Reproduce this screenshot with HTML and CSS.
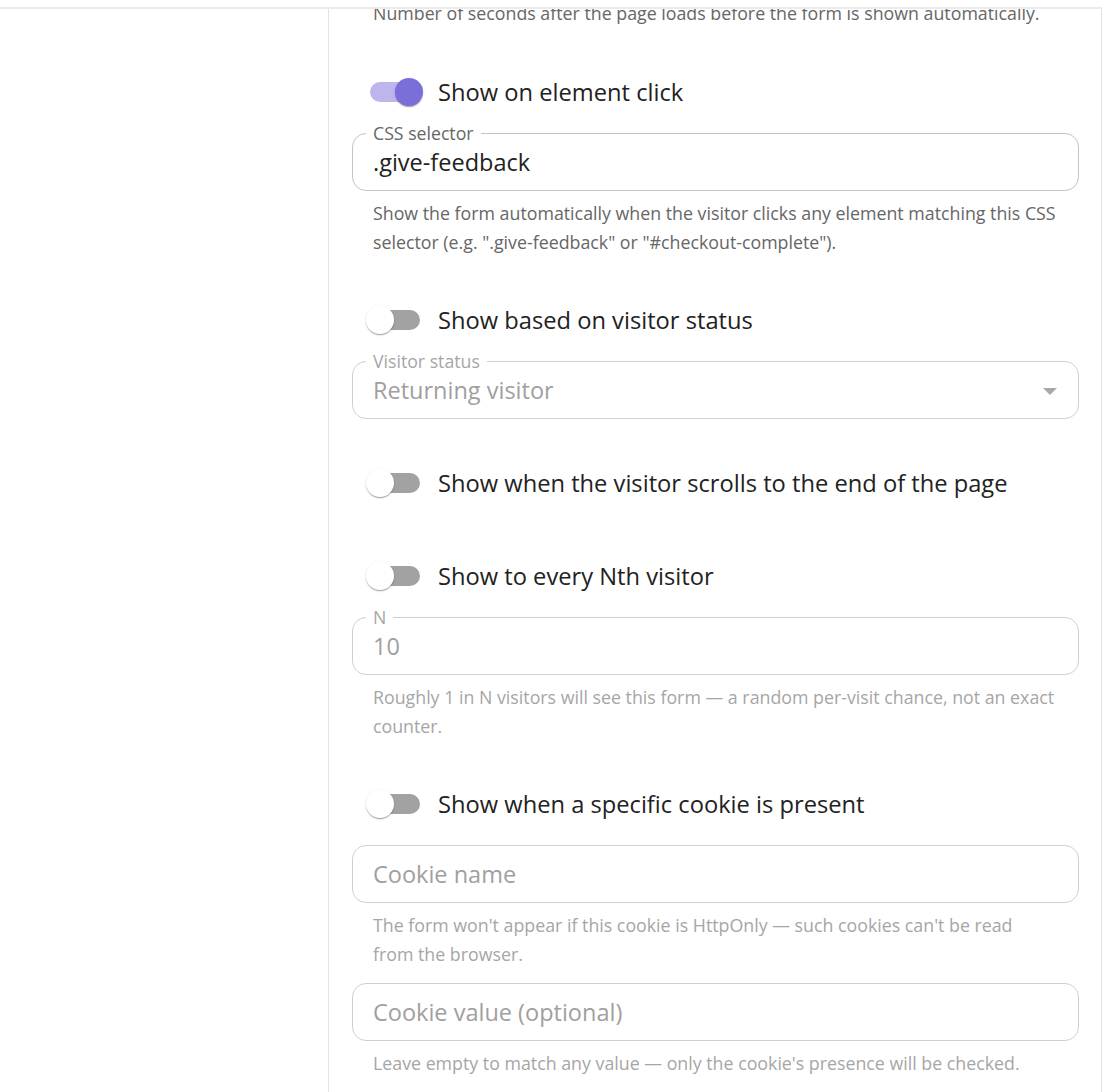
FILE: index.html
```html
<!DOCTYPE html>
<html lang="en">
<head>
<meta charset="utf-8">
<title>Form display triggers</title>
<link rel="stylesheet" href="styles.css">
</head>
<body>
<div class="topbar"></div>
<div class="layout">
  <aside class="sidebar"></aside>
  <main class="panel">
    <p class="helper first">Number of seconds after the page loads before the form is shown automatically.</p>

    <section class="trigger lead">
      <div class="switch-row">
        <span class="switch on"><span class="track"></span><span class="thumb"></span></span>
        <span class="switch-label">Show on element click</span>
      </div>
      <div class="field">
        <span class="field-label">CSS selector</span>
        <span class="field-value">.give-feedback</span>
      </div>
      <p class="helper">Show the form automatically when the visitor clicks any element matching this CSS selector (e.g. ".give-feedback" or "#checkout-complete").</p>
    </section>

    <section class="trigger">
      <div class="switch-row">
        <span class="switch"><span class="track"></span><span class="thumb"></span></span>
        <span class="switch-label">Show based on visitor status</span>
      </div>
      <div class="field disabled">
        <span class="field-label">Visitor status</span>
        <span class="field-value">Returning visitor</span>
        <span class="arrow"></span>
      </div>
    </section>

    <section class="trigger solo">
      <div class="switch-row">
        <span class="switch"><span class="track"></span><span class="thumb"></span></span>
        <span class="switch-label">Show when the visitor scrolls to the end of the page</span>
      </div>
    </section>

    <section class="trigger">
      <div class="switch-row">
        <span class="switch"><span class="track"></span><span class="thumb"></span></span>
        <span class="switch-label">Show to every Nth visitor</span>
      </div>
      <div class="field disabled">
        <span class="field-label">N</span>
        <span class="field-value">10</span>
      </div>
      <p class="helper disabled">Roughly 1 in N visitors will see this form — a random per-visit chance, not an exact counter.</p>
    </section>

    <section class="trigger">
      <div class="switch-row">
        <span class="switch"><span class="track"></span><span class="thumb"></span></span>
        <span class="switch-label">Show when a specific cookie is present</span>
      </div>
      <div class="field disabled">
        <span class="field-value placeholder">Cookie name</span>
      </div>
      <p class="helper disabled narrow">The form won't appear if this cookie is HttpOnly — such cookies can't be read from the browser.</p>
      <div class="field disabled second">
        <span class="field-value placeholder">Cookie value (optional)</span>
      </div>
      <p class="helper disabled">Leave empty to match any value — only the cookie's presence will be checked.</p>
    </section>
  </main>
</div>
</body>
</html>
```

FILE: styles.css
```css
* { box-sizing: border-box; }

html, body {
  margin: 0;
  padding: 0;
  background: #fff;
  height: 100%;
  overflow: hidden;
}

body {
  font-family: "Open Sans", "Noto Sans", sans-serif;
  color: rgba(0, 0, 0, 0.87);
}

.topbar {
  position: relative;
  z-index: 2;
  height: 9px;
  background: #fff;
  border-bottom: 2px solid #ebebeb;
}

.layout {
  display: grid;
  grid-template-columns: 328px 774px;
  min-height: 1100px;
}

.panel {
  border-left: 1px solid #e4e4e4;
  border-right: 1px solid #e4e4e4;
  padding: 0 22px 0 23px;
}

.helper {
  margin: 8px 0 0;
  padding: 0 21px;
  font-size: 17.8px;
  line-height: 29.5px;
  color: #666;
}

.helper.first {
  margin-top: -10px;
}

.helper.disabled {
  color: #a6a6a6;
}

.helper.narrow {
  padding-right: 64px;
}

.trigger {
  margin-top: 43px;
}

.trigger.lead {
  margin-top: 44px;
}

.trigger.solo {
  margin-top: 45px;
}

.trigger.solo + .trigger {
  margin-top: 55px;
}

.switch-row {
  display: flex;
  align-items: center;
  height: 38px;
  gap: 6px;
}

.switch {
  position: relative;
  width: 80px;
  height: 38px;
  flex: none;
}

.track {
  position: absolute;
  left: 18px;
  top: 9px;
  width: 50px;
  height: 20px;
  border-radius: 10px;
  background: #a2a2a2;
}

.thumb {
  position: absolute;
  left: 14px;
  top: 5px;
  width: 28px;
  height: 28px;
  border-radius: 50%;
  background: #fff;
  box-shadow: 0 2px 1px -1px rgba(0,0,0,0.2), 0 1px 1px 0 rgba(0,0,0,0.14), 0 1px 3px 0 rgba(0,0,0,0.12);
}

.switch.on .track {
  background: #bcb6ec;
}

.switch.on .thumb {
  left: 43px;
  background: #7a6fd9;
}

.switch-label {
  font-size: 23.7px;
  line-height: 30px;
  color: #222;
}

.field {
  position: relative;
  display: flex;
  align-items: center;
  height: 58px;
  margin-top: 22px;
  padding: 0 20px;
  border: 1px solid #c4c4c4;
  border-radius: 14px;
}

.field.second {
  margin-top: 13px;
}

.field-label {
  position: absolute;
  top: -12px;
  left: 13px;
  padding: 0 7px;
  background: #fff;
  font-size: 17.7px;
  line-height: 22px;
  color: #666;
}

.field-value {
  font-size: 23.5px;
  line-height: 30px;
  padding-top: 1px;
  color: #222;
}

.field.disabled {
  border-color: #cfcfcf;
}

.field.disabled .field-label {
  color: #a6a6a6;
}

.field.disabled .field-value {
  color: #a0a0a0;
}

.arrow {
  position: absolute;
  right: 21px;
  top: 26px;
  width: 0;
  height: 0;
  border-left: 7px solid transparent;
  border-right: 7px solid transparent;
  border-top: 7px solid #a8a8a8;
}
```
